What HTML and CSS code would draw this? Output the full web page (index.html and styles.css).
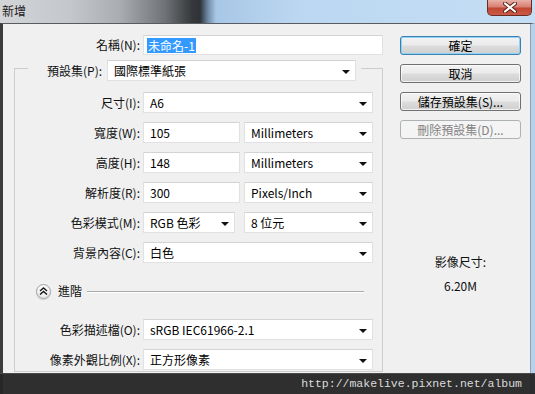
FILE: index.html
```html
<!DOCTYPE html>
<html lang="zh-Hant">
<head>
<meta charset="utf-8">
<title>新增</title>
<link rel="stylesheet" href="styles.css">
</head>
<body>
<div class="window">
  <div class="titlebar">
    <span class="title">新增</span>
    <div class="close">
      <svg width="14" height="11" viewBox="0 0 14 11"><path d="M2 1.5 L12 9.5 M12 1.5 L2 9.5" stroke="#5a1d18" stroke-width="4" stroke-linecap="round"/><path d="M2 1.5 L12 9.5 M12 1.5 L2 9.5" stroke="#ffffff" stroke-width="2.2" stroke-linecap="round"/></svg>
    </div>
  </div>
  <div class="client">
    <div class="main">
      <div class="name-row">
        <span class="lbl">名稱(N):</span>
        <div class="field text"><span class="selected">未命名-1</span></div>
      </div>
      <fieldset class="group">
        <legend class="preset">
          <span class="lbl">預設集(P):</span>
          <div class="field select preset-select"><span>國際標準紙張</span><i class="arrow"></i></div>
        </legend>
        <div class="rows">
          <div class="row">
            <span class="lbl">尺寸(I):</span>
            <div class="field select"><span>A6</span><i class="arrow"></i></div>
          </div>
          <div class="row">
            <span class="lbl">寬度(W):</span>
            <div class="pair">
              <div class="field text num"><span>105</span></div>
              <div class="field select unit"><span>Millimeters</span><i class="arrow"></i></div>
            </div>
          </div>
          <div class="row">
            <span class="lbl">高度(H):</span>
            <div class="pair">
              <div class="field text num"><span>148</span></div>
              <div class="field select unit"><span>Millimeters</span><i class="arrow"></i></div>
            </div>
          </div>
          <div class="row">
            <span class="lbl">解析度(R):</span>
            <div class="pair">
              <div class="field text num"><span>300</span></div>
              <div class="field select unit"><span>Pixels/Inch</span><i class="arrow"></i></div>
            </div>
          </div>
          <div class="row">
            <span class="lbl">色彩模式(M):</span>
            <div class="pair wide-gap">
              <div class="field select mode"><span>RGB 色彩</span><i class="arrow"></i></div>
              <div class="field select unit"><span>8 位元</span><i class="arrow"></i></div>
            </div>
          </div>
          <div class="row">
            <span class="lbl">背景內容(C):</span>
            <div class="field select"><span>白色</span><i class="arrow"></i></div>
          </div>
          <div class="adv">
            <span class="adv-btn">
              <svg width="9" height="8" viewBox="0 0 9 8"><path d="M1 4 L4.5 1 L8 4 M1 7.5 L4.5 4.5 L8 7.5" fill="none" stroke="#1a1a1a" stroke-width="1.5"/></svg>
            </span>
            <span class="adv-text">進階</span>
            <span class="adv-line"></span>
          </div>
          <div class="row">
            <span class="lbl">色彩描述檔(O):</span>
            <div class="field select"><span>sRGB IEC61966-2.1</span><i class="arrow"></i></div>
          </div>
          <div class="row">
            <span class="lbl">像素外觀比例(X):</span>
            <div class="field select"><span>正方形像素</span><i class="arrow"></i></div>
          </div>
        </div>
      </fieldset>
    </div>
    <div class="side">
      <div class="btn default">確定</div>
      <div class="btn">取消</div>
      <div class="btn">儲存預設集(S)...</div>
      <div class="btn disabled">刪除預設集(D)...</div>
      <div class="info">
        <span>影像尺寸:</span>
        <span>6.20M</span>
      </div>
    </div>
  </div>
  <div class="watermark">http://makelive.pixnet.net/album</div>
</div>
</body>
</html>
```
FILE: styles.css
```css
* { box-sizing: border-box; }
html, body { margin: 0; padding: 0; }
body {
  width: 535px;
  height: 394px;
  overflow: hidden;
  font-family: "Noto Sans CJK TC", "Noto Sans", sans-serif;
  font-size: 12px;
  color: #111;
}
.window {
  position: relative;
  width: 535px;
  height: 394px;
  display: flex;
  flex-direction: column;
  background: #3a3a3a;
}
.titlebar {
  height: 23px;
  flex: none;
  display: flex;
  justify-content: space-between;
  align-items: flex-start;
  background:
    linear-gradient(to right, #d3d5d8 0px, #c4c7cb 70px, #a9acb0 120px, #6f7276 165px, #36383b 192px, #2f3237 200px, #6f8aa6 208px, #a8c7e6 216px, #bcd7f1 300px, #c4def5 535px);
}
.title {
  padding: 2px 0 0 2px;
  line-height: 17px;
  color: #1b1b1b;
}
.close {
  width: 45px;
  height: 16px;
  margin-right: 3px;
  border: 1px solid #6e2a22;
  border-top: none;
  border-radius: 0 0 5px 5px;
  background: linear-gradient(to bottom, #e8b1a8 0%, #d88073 45%, #c24634 55%, #c95b46 100%);
  display: flex;
  align-items: center;
  justify-content: center;
}
.client {
  flex: 1;
  display: flex;
  align-items: flex-start;
  background: #f0f0f0;
  border-top: 1px solid #585b60;
  border-left: 3px solid #3c3c3c;
  border-right: 4px solid #b7d1ea;
  padding: 11px 10px 0 11px;
  box-shadow: inset -1px 0 0 #8fa3b8;
}
.main {
  width: 369px;
  flex: none;
}
.lbl {
  text-align: right;
  white-space: nowrap;
  line-height: 16px;
}
.name-row {
  display: grid;
  grid-template-columns: 126px 240px;
  column-gap: 3px;
  align-items: center;
  height: 20px;
}
.field {
  height: 21px;
  background: #fff;
  border: 1px solid #e1e1e1;
  border-top-color: #d3d3d3;
  display: flex;
  align-items: center;
  padding: 0 6px;
  white-space: nowrap;
  line-height: 16px;
  color: #000;
}
.name-row .field { height: 20px; padding-left: 3px; }
.selected {
  background: #3399ff;
  color: #fff;
  padding: 0 1px;
  line-height: 15px;
}
.select { justify-content: space-between; }
.arrow {
  width: 0;
  height: 0;
  border-left: 4px solid transparent;
  border-right: 4px solid transparent;
  border-top: 4px solid #111;
  margin-top: 2px;
  margin-right: -1px;
}
.group {
  width: 369px;
  min-width: 0;
  margin: 1px 0 0 0;
  padding: 11px 9px 1px 0;
  border: 1px solid #cdcdcd;
}
.preset {
  margin-left: 13px;
  padding: 4px 5px 0 19px;
  display: flex;
  align-items: center;
  gap: 5px;
}
.preset-select { width: 249px; }
.rows {
  display: flex;
  flex-direction: column;
  gap: 9px;
}
.row {
  display: grid;
  grid-template-columns: 125px 230px;
  column-gap: 3px;
  align-items: center;
  height: 21px;
}
.pair {
  display: flex;
  gap: 4px;
}
.pair.wide-gap { gap: 9px; }
.num { width: 97px; }
.mode { width: 92px; }
.unit { width: 129px; }
.adv {
  display: flex;
  align-items: center;
  height: 18px;
  margin: 10px 9px 10px 21px;
}
.adv-btn {
  width: 15px;
  height: 15px;
  border-radius: 50%;
  border: 1px solid #a3a3a3;
  background: radial-gradient(circle at 50% 35%, #ffffff 0%, #f3f3f3 50%, #d6d6d6 100%);
  box-shadow: 0 1px 1px rgba(0,0,0,0.15);
  display: flex;
  align-items: center;
  justify-content: center;
  flex: none;
}
.adv-text {
  margin-left: 7px;
  line-height: 16px;
}
.adv-line {
  flex: 1;
  margin-left: 5px;
  height: 2px;
  border-top: 1px solid #a8a8a8;
  border-bottom: 1px solid #ffffff;
  margin-top: 1px;
}
.side {
  width: 121px;
  margin-left: 17px;
  padding-top: 1px;
  display: flex;
  flex-direction: column;
  gap: 9px;
}
.btn {
  height: 19px;
  border: 1px solid #707070;
  border-radius: 3px;
  background: linear-gradient(to bottom, #f2f2f2 0%, #ebebeb 48%, #dddddd 52%, #cfcfcf 100%);
  box-shadow: inset 0 0 0 1px rgba(255,255,255,0.7);
  display: flex;
  align-items: center;
  justify-content: center;
  line-height: 16px;
  color: #000;
  white-space: nowrap;
}
.btn.default {
  border-color: #3c7fb1;
  box-shadow: inset 0 0 0 1px #8fd3f5;
  background: linear-gradient(to bottom, #eaf6fd 0%, #d9f0fc 48%, #bee6fd 52%, #a7d9f5 100%);
  background: linear-gradient(to bottom, #f2f2f2 0%, #ebebeb 48%, #dddddd 52%, #cfcfcf 100%);
}
.btn.disabled {
  border-color: #adb2b5;
  background: #f4f4f4;
  box-shadow: none;
  color: #838383;
}
.info {
  margin-top: 106px;
  display: flex;
  flex-direction: column;
  align-items: center;
  gap: 8px;
  line-height: 16px;
}
.watermark {
  position: absolute;
  left: 0;
  right: 0;
  bottom: 0;
  height: 21px;
  background: rgba(38, 38, 38, 0.96);
  border-top: 1px solid #4a4a4a;
  color: #dcdcdc;
  font-family: "Liberation Mono", "DejaVu Sans Mono", monospace;
  font-size: 11.5px;
  line-height: 20px;
  text-align: right;
  padding-right: 13px;
}
```
